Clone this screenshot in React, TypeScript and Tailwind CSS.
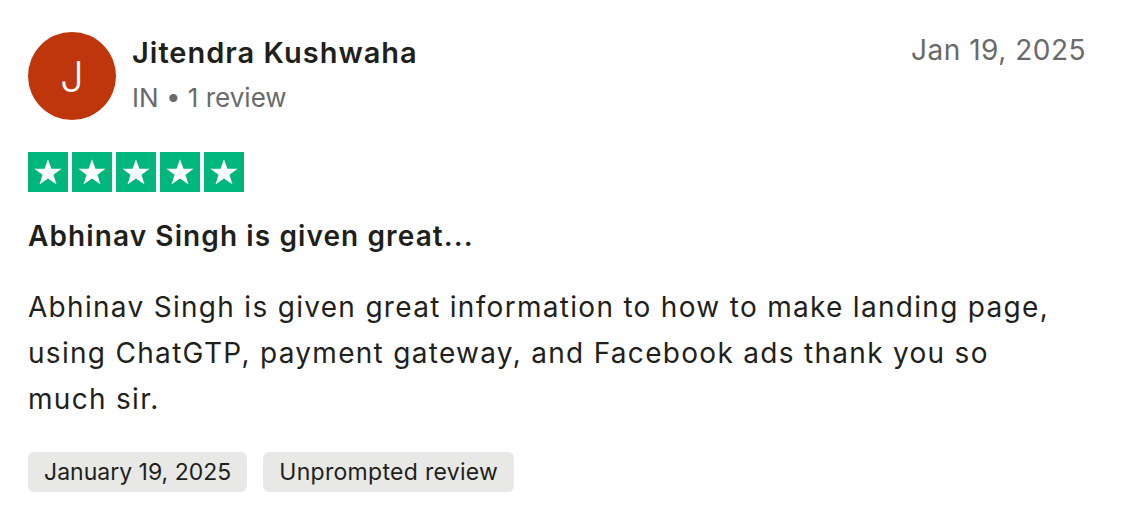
function StarBox() {
  return (
    <div className="w-10 h-10 bg-[#00b67a] flex items-center justify-center">
      <svg width="32" height="32" viewBox="0 0 24 24" fill="#fff">
        <path d="M12 2.5l2.6 7.1h7.6l-6.1 4.5 2.3 7.3L12 16.9l-6.4 4.5 2.3-7.3-6.1-4.5h7.6z" />
      </svg>
    </div>
  )
}

export default function App() {
  return (
    <div className="w-[1142px] h-[524px] bg-white px-7 pt-8 text-[#1f1f1c]" style={{ fontFamily: 'Inter, "Noto Sans", sans-serif' }}>
      {/* header */}
      <div className="flex items-start">
        <div className="w-[88px] h-[88px] rounded-full bg-[#c0360c] flex items-center justify-center text-white text-[42px] font-light shrink-0">
          J
        </div>
        <div className="ml-4 pt-1 flex-1">
          <div className="text-[29px] font-semibold leading-[34px] tracking-[1px]">Jitendra Kushwaha</div>
          <div className="text-[26px] leading-[32px] mt-[12px] text-[#696a6a]">IN • 1 review</div>
        </div>
        <div className="pt-[1px] pr-[28px] text-[28px] leading-[34px] tracking-[0.5px] text-[#696a6a]">Jan 19, 2025</div>
      </div>

      <div className="flex gap-[4px] mt-[32px]">
        <StarBox />
        <StarBox />
        <StarBox />
        <StarBox />
        <StarBox />
      </div>

      <div className="mt-[27px] text-[28px] font-semibold leading-[34px] tracking-[1.1px]">Abhinav Singh is given great...</div>

      <p className="mt-[31px] text-[28px] leading-[46px] tracking-[1.3px] max-w-[1035px]">
        Abhinav Singh is given great information to how to make landing page, using ChatGTP, payment gateway, and Facebook ads thank you so much sir.
      </p>

      <div className="flex gap-4 mt-[30px]">
        <span className="h-10 px-4 rounded-md bg-[#e8e8e6] flex items-center text-[23px]">January 19, 2025</span>
        <span className="h-10 px-4 rounded-md bg-[#e8e8e6] flex items-center text-[23px] tracking-[0.3px]">Unprompted review</span>
      </div>
    </div>
  )
}
